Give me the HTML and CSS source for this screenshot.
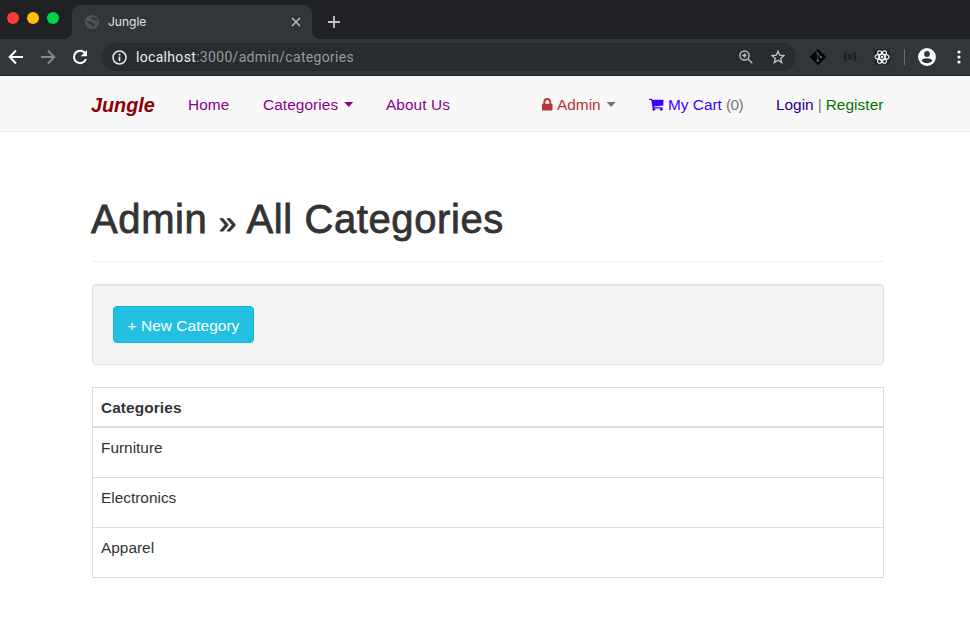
FILE: index.html
```html
<!DOCTYPE html>
<html lang="en">
<head>
<meta charset="utf-8">
<title>Jungle</title>
<link rel="stylesheet" href="styles.css">
</head>
<body>
<div class="tabstrip">
  <div class="lights"><i class="red"></i><i class="yellow"></i><i class="green"></i></div>
  <div class="tab">
    <svg class="globe" width="14" height="14" viewBox="0 0 14 14"><circle cx="7" cy="7" r="7" fill="#505458"/><path d="M1.500 6l3 .3 3 .4 1 1.500 2 .3-.5 1.800-2.500 2-.8-2.300-2.700-1.200zM7.500 1.400l-1.200 2 1.200 1.300 1.900-.5.5 1.500 2.600.7-.7-3z" fill="#303639"/></svg>
    <span class="tab-title">Jungle</span>
    <svg class="close" width="10" height="10" viewBox="0 0 10 10"><path d="M1 1l8 8M9 1l-8 8" stroke="#b9bcbf" stroke-width="1.500"/></svg>
  </div>
  <svg class="plus" width="12" height="12" viewBox="0 0 12 12"><path d="M6 0v12M0 6h12" stroke="#c2c5c7" stroke-width="1.800"/></svg>
</div>
<div class="toolbar">
  <svg class="back" width="16" height="16" viewBox="0 0 16 16"><path d="M15 8H2M8 1.500L1.700 8 8 14.500" fill="none" stroke="#fff" stroke-width="2"/></svg>
  <svg class="forward" width="16" height="16" viewBox="0 0 16 16"><path d="M1 8h13M8 1.500L14.300 8 8 14.500" fill="none" stroke="#85888b" stroke-width="1.900"/></svg>
  <svg class="reload" width="16" height="16" viewBox="0 0 16 16"><path d="M13.400 4.600A6.200 6.200 0 1 0 14 10" fill="none" stroke="#fff" stroke-width="2"/><path d="M15 1v6.300H8.700z" fill="#fff"/></svg>
  <div class="address">
    <svg width="15" height="15" viewBox="0 0 15 15"><circle cx="7.500" cy="7.500" r="6.500" fill="none" stroke="#e8eaeb" stroke-width="1.500"/><path d="M7.500 6.600v4.600M7.500 3.700v1.700" stroke="#e8eaeb" stroke-width="1.700"/></svg>
    <span class="url">localhost<span>:3000/admin/categories</span></span>
    <svg class="magnify" width="14" height="14" viewBox="0 0 14 14"><circle cx="5.500" cy="5.500" r="4.600" fill="none" stroke="#b6babd" stroke-width="1.500"/><path d="M9 9l4.300 4.300M5.500 3.300v4.400M3.300 5.500h4.400" stroke="#b6babd" stroke-width="1.500"/></svg>
    <svg class="star" width="14" height="14" viewBox="0 0 14 14"><path d="M7 1.200l1.700 4 4.300.4-3.300 2.800 1 4.200L7 10.300l-3.700 2.300 1-4.200L1 5.600l4.300-.4z" fill="none" stroke="#c6c9cb" stroke-width="1.300"/></svg>
  </div>
  <svg class="git" width="18" height="18" viewBox="0 0 18 18"><path d="M9 .7L17.300 9 9 17.300.7 9z" fill="#050505"/><path d="M6.400 2.800l2.400 2.400v7.600M9 6l2.700 2.700" stroke="#4b5053" fill="none" stroke-width="1"/><circle cx="8.800" cy="12.800" r="1.300" fill="#5c6164"/><circle cx="8.800" cy="5.500" r="1.100" fill="#5c6164"/><circle cx="11.800" cy="9" r="1.200" fill="#5c6164"/></svg>
  <svg class="json" width="14" height="10" viewBox="0 0 14 10"><path d="M3.500 1C1.800 1 2.500 2.500 2.300 4L1 5l1.300 1C2.500 7.500 1.800 9 3.500 9M10.500 1c1.700 0 1 1.500 1.200 3L13 5l-1.300 1c-.2 1.500.5 3-1.200 3" fill="none" stroke="#151719" stroke-width="1.400"/><path d="M4.500 3h5M4.500 5h5M4.500 7h5" stroke="#141618" stroke-width="1.200"/></svg>
  <svg class="react" width="16" height="16" viewBox="0 0 16 16"><path d="M0 0h16v16H0z" fill="#26292c"/><g fill="none" stroke="#fff" stroke-width="1.100"><ellipse cx="8" cy="8" rx="7" ry="2.700"/><ellipse cx="8" cy="8" rx="7" ry="2.700" transform="rotate(60 8 8)"/><ellipse cx="8" cy="8" rx="7" ry="2.700" transform="rotate(120 8 8)"/></g><circle cx="8" cy="8" r="1.300" fill="#fff"/></svg>
  <i class="divider"></i>
  <svg class="user" width="18" height="18" viewBox="0 0 18 18"><circle cx="9" cy="9" r="8.900" fill="#fff"/><circle cx="9" cy="6" r="2.900" fill="#303438"/><path d="M3.600 12.600c1.200-3 9.600-3 10.800 0-2.300 3.600-8.500 3.600-10.800 0z" fill="#303438"/></svg>
  <svg class="dots" width="4" height="14" viewBox="0 0 4 14"><g fill="#fff"><circle cx="2" cy="2" r="1.600"/><circle cx="2" cy="7" r="1.600"/><circle cx="2" cy="12" r="1.600"/></g></svg>
</div>
<nav class="navbar">
  <a class="brand">Jungle</a>
  <a class="home">Home</a>
  <a class="categories">Categories<i class="caret"></i></a>
  <a class="about">About Us</a>
  <a class="admin"><svg width="11" height="13" viewBox="0 0 11 13"><path d="M2.300 6V4a3 3 0 0 1 6 0V6" fill="none" stroke="#b83236" stroke-width="1.900"/><rect y="5.700" width="10.500" height="6.800" rx=".8" fill="#b83236"/></svg><span>Admin</span><i class="caret"></i></a>
  <div class="cart"><svg width="15" height="13" viewBox="0 0 15 13"><path d="M0 .7h3l.4 1.100H14.400v5.600L5 8.400l.2.800h8.200v1.300H3.700L2.200 2.100H0z" fill="#3d00ff"/><circle cx="4.900" cy="11.300" r="1.400" fill="#3d00ff"/><circle cx="12.300" cy="11.300" r="1.400" fill="#3d00ff"/></svg><a>My Cart</a> <span>(0)</span></div>
  <div class="session"><a class="login">Login</a> | <a class="register">Register</a></div>
</nav>
<main>
  <h1>Admin <span>»</span> All Categories</h1>
  <section class="well"><a class="btn">+ New Category</a></section>
  <table>
    <thead><tr><th>Categories</th></tr></thead>
    <tbody><tr><td>Furniture</td></tr><tr><td>Electronics</td></tr><tr><td>Apparel</td></tr></tbody>
  </table>
</main>
</body>
</html>
```
FILE: styles.css
```css
* { box-sizing: border-box; }
body {
  margin: 0;
  width: 970px;
  height: 624px;
  overflow: hidden;
  background: #fff;
  color: #333;
  font: 15.4px/22px "Liberation Sans", Arial, sans-serif;
}
svg { display: block; flex: none; }

/* Browser window */
.tabstrip { height: 39px; background: #202124; display: flex; }
.lights { display: flex; gap: 8px; padding: 12px 0 0 7px; width: 72px; }
.lights i { width: 12px; height: 12px; border-radius: 50%; }
.red { background: #ff3b3a; }
.yellow { background: #ffbf00; }
.green { background: #00d848; }
.tab {
  position: relative;
  width: 240px;
  height: 34px;
  margin-top: 5px;
  padding: 0 11px 0 13px;
  border-radius: 8px 8px 0 0;
  background: #303639;
  display: flex;
  align-items: center;
}
.tab::before, .tab::after {
  content: "";
  position: absolute;
  bottom: 0;
  width: 8px;
  height: 8px;
}
.tab::before { left: -8px; background: radial-gradient(circle at 0 0, transparent 7.5px, #303639 8px); }
.tab::after { right: -8px; background: radial-gradient(circle at 100% 0, transparent 7.5px, #303639 8px); }
.tab-title { flex: 1; margin-left: 9px; color: #e0e2e3; font: 12px/16px Inter, sans-serif; }
.plus { margin: 16px 0 0 16px; }
.toolbar {
  height: 37px;
  background: #303639;
  border-bottom: 1px solid #202124;
  display: flex;
  align-items: center;
  padding-left: 8px;
}
.forward { margin-left: 16px; }
.reload { margin-left: 16px; }
.address {
  width: 694px;
  height: 28px;
  margin-left: 14px;
  padding: 0 11px 0 10px;
  border-radius: 14px;
  background: #272c2f;
  display: flex;
  align-items: center;
}
.url { flex: 1; margin-left: 9px; color: #eceeef; font: 14px/20px Roboto, sans-serif; letter-spacing: .32px; }
.url span { color: #969b9e; }
.star { margin-left: 18px; }
.git { margin-left: 13px; }
.json { margin-left: 16px; }
.react { margin-left: 17px; }
.divider { width: 1px; height: 16px; margin-left: 14px; background: #686c6f; }
.user { margin-left: 13px; }
.dots { margin-left: 21px; }

/* Site navigation */
.navbar {
  height: 56px;
  padding: 2px 86px 0 91px;
  background: #f8f8f8;
  border-bottom: 1px solid #e7e7e7;
  display: flex;
  align-items: center;
  color: #777;
  white-space: nowrap;
}
.navbar > * { display: flex; align-items: center; flex: none; }
.brand { width: 97px; color: #8b0000; font-size: 19.8px; font-weight: bold; font-style: italic; }
.home, .categories, .about { color: #8b008b; letter-spacing: .08px; }
.home { width: 75px; }
.categories { width: 123px; }
.about { width: 156px; }
.caret {
  width: 9px;
  height: 5px;
  margin-left: 6px;
  background: currentColor;
  clip-path: polygon(0 0, 100% 0, 50% 100%);
}
.admin { width: 107px; }
.admin span { margin-left: 4px; color: #b83236; }
.cart { width: 127px; }
.cart a { margin: 0 4px; color: #3d00ff; }
.cart span { letter-spacing: -.5px; }
.session { gap: 4px; }
.login { color: #1d0085; }
.register { color: #007500; letter-spacing: .06px; }

/* Page content */
main { width: 792px; margin: 0 0 0 92px; }
h1 {
  margin: 0 0 22px;
  height: 130px;
  padding-top: 65px;
  font-size: 40px;
  line-height: 44px;
  font-weight: normal;
  text-indent: -1px;
  letter-spacing: .6px;
  -webkit-text-stroke: .8px #333;
  white-space: nowrap;
  border-bottom: 1px solid #eee;
}
h1 span { font-size: 31px; line-height: 1; }
.well {
  height: 81px;
  padding: 21px 20px;
  border: 1px solid #e2e2e2;
  border-radius: 4px;
  background: #f4f4f4;
  box-shadow: inset 0 1px 1px rgba(0, 0, 0, .05);
}
.btn {
  display: block;
  width: 141px;
  height: 37px;
  border: 1px solid #12b3d7;
  border-radius: 4px;
  background: #23c0e1;
  color: #fff;
  line-height: 37px;
  text-align: center;
  letter-spacing: .07px;
}
table { width: 100%; margin-top: 22px; border-collapse: collapse; }
th, td { padding: 9px 8px 0; border: 1px solid #ddd; text-align: left; vertical-align: top; }
th { height: 39px; border-bottom-width: 2px; letter-spacing: .1px; }
td { height: 50px; }
tbody tr:first-child td { height: 51px; }
```
